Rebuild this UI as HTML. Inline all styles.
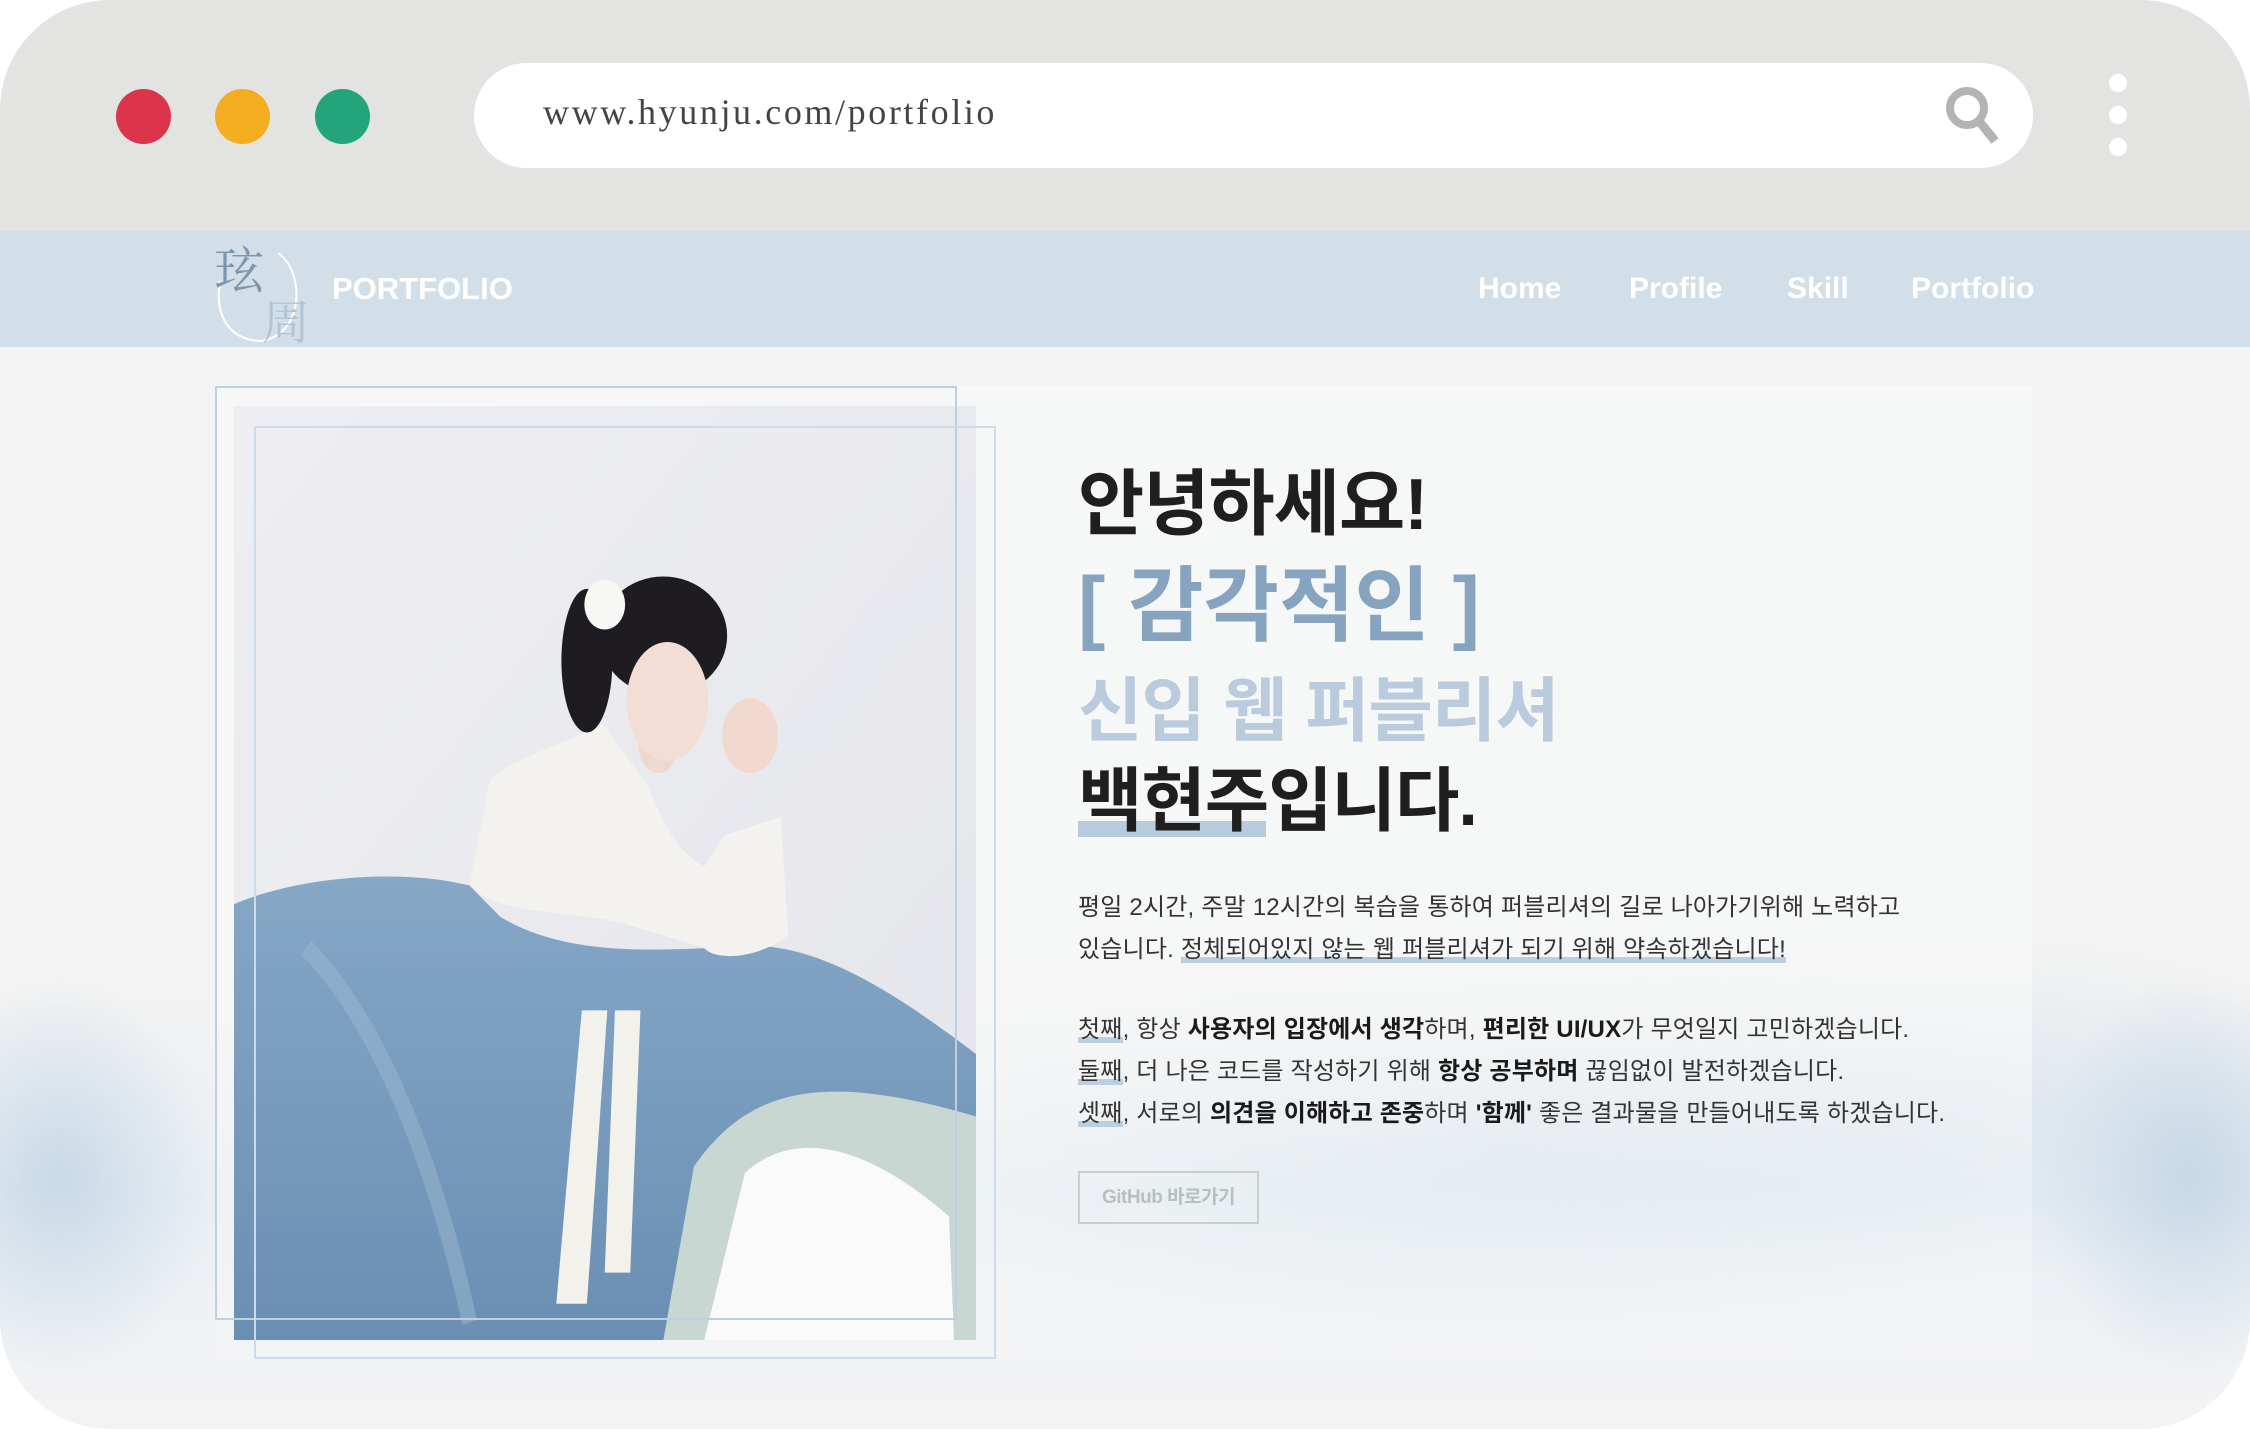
<!DOCTYPE html>
<html><head><meta charset="utf-8"><style>
*{margin:0;padding:0;box-sizing:border-box}
html,body{width:2250px;height:1431px;background:#fff;overflow:hidden}
.win{position:absolute;left:0;top:0;width:2250px;height:1429px;border-radius:110px;overflow:hidden;background:#f3f3f3}
.top{position:absolute;left:0;top:0;width:2250px;height:231px;background:#e3e3e2}
.dot{position:absolute;top:89px;width:55px;height:55px;border-radius:50%}
.url{position:absolute;left:474px;top:63px;width:1559px;height:105px;border-radius:53px;background:#fff}
.url span{position:absolute;left:69px;top:28px;font:36px "Liberation Serif",serif;color:#444;letter-spacing:2.6px}
.nav{position:absolute;left:0;top:231px;width:2250px;height:116px;background:#d3dfe8}
.nav a{position:absolute;top:41px;font:bold 30px "Liberation Sans",sans-serif;color:#fff;text-decoration:none}
.mist{position:absolute;left:0;top:347px;width:2250px;height:1084px;
background:
radial-gradient(ellipse 150px 200px at 60px 830px,rgba(175,200,222,.55),rgba(175,200,222,0)),
radial-gradient(ellipse 150px 200px at 2190px 830px,rgba(175,200,222,.55),rgba(175,200,222,0)),
radial-gradient(ellipse 600px 200px at 1500px 800px,rgba(190,210,228,.45),rgba(190,210,228,0)),
radial-gradient(ellipse 500px 180px at 1900px 760px,rgba(190,210,228,.35),rgba(190,210,228,0)),
linear-gradient(#f3f3f3 0,#f3f3f3 640px,#e8eef3 850px,#f0f2f4 1000px,#f3f3f3 1084px)}
.card{position:absolute;left:215px;top:386px;width:1817px;height:973px;
background:linear-gradient(rgba(246,247,247,.95) 0,rgba(246,247,247,.95) 560px,rgba(246,247,247,.45) 800px,rgba(246,247,247,.5) 973px)}
.fr{position:absolute;border:2px solid #bcd0e2}
.h{position:absolute;left:1078px;font-family:"Liberation Sans","Noto Sans CJK KR",sans-serif;font-weight:bold;line-height:100px;white-space:nowrap;letter-spacing:-1px}
.p{position:absolute;left:1078px;font:24px/42px "Liberation Sans","Noto Sans CJK KR",sans-serif;color:#333;white-space:nowrap;letter-spacing:0.2px}
.p b{color:#1a1a1a}
.u{background:linear-gradient(transparent 78%,#bccfe0 78%)}
</style></head><body>
<div class="win">
<div class="top"></div>
<div class="dot" style="left:116px;background:#dc344a"></div>
<div class="dot" style="left:215px;background:#f3ad1e"></div>
<div class="dot" style="left:315px;background:#24a47a"></div>
<div class="url"><span>www.hyunju.com/portfolio</span>
<svg style="position:absolute;left:1468px;top:20px" width="70" height="70" viewBox="0 0 70 70"><circle cx="25" cy="25" r="17" fill="none" stroke="#b3b3b3" stroke-width="8"/><line x1="37" y1="38" x2="53" y2="58" stroke="#b3b3b3" stroke-width="9"/></svg>
</div>
<div class="dot" style="left:2109px;top:74px;width:18px;height:18px;background:#fff"></div>
<div class="dot" style="left:2109px;top:106px;width:18px;height:18px;background:#fff"></div>
<div class="dot" style="left:2109px;top:138px;width:18px;height:18px;background:#fff"></div>
<div class="nav">
<svg style="position:absolute;left:210px;top:0" width="110" height="116" viewBox="0 0 110 116"><path d="M68 22 C95 40 95 105 50 110 C15 108 5 80 10 50" fill="none" stroke="#fff" stroke-width="2"/>
<text x="4" y="57" font-family="Noto Serif CJK SC,serif" font-size="50" fill="#7b97b0">玹</text>
<text x="52" y="108" font-family="Noto Serif CJK SC,serif" font-size="48" fill="#b2c5d5">周</text></svg>
<a style="left:332px;font-size:31px;top:40px">PORTFOLIO</a>
<a style="left:1478px">Home</a><a style="left:1629px">Profile</a><a style="left:1787px">Skill</a><a style="left:1911px">Portfolio</a>
</div>
<div class="mist"></div>
<div class="card"></div>
<svg style="position:absolute;left:234px;top:406px" width="742" height="934" viewBox="38 32 1455 1496" preserveAspectRatio="none">
<defs><linearGradient id="bg" x1="0" y1="0" x2="1" y2="1"><stop offset="0" stop-color="#eeeef2"/><stop offset="1" stop-color="#e4e5ea"/></linearGradient>
<linearGradient id="sk" x1="0" y1="0" x2="0" y2="1"><stop offset="0" stop-color="#86a7c6"/><stop offset="1" stop-color="#6a8fb3"/></linearGradient></defs>
<rect x="38" y="32" width="1455" height="1496" fill="url(#bg)"/>
<path d="M38 830 C150 790 350 770 500 800 L560 850 C700 920 900 900 1000 900 C1150 880 1300 950 1493 1070 L1493 1528 L38 1528Z" fill="url(#sk)"/>
<path d="M180 900 C300 1000 420 1200 500 1500" stroke="#9cb8d2" stroke-width="30" fill="none" opacity=".5"/>
<path d="M940 1250 C1050 1120 1200 1100 1493 1170 L1493 1528 L880 1528Z" fill="#c9d7d2"/>
<path d="M1040 1260 C1150 1180 1300 1230 1440 1330 L1450 1528 L960 1528Z" fill="#fafafb"/>
<ellipse cx="870" cy="570" rx="40" ry="50" fill="#efd8ce"/>
<path d="M540 630 C600 590 700 570 760 540 L850 640 C880 700 900 740 960 770 L1000 720 L1110 690 L1125 880 C1060 920 980 920 960 900 L800 860 C700 840 560 850 500 800Z" fill="#f4f2ee"/>
<path d="M720 1000 L770 1000 L730 1470 L670 1470Z" fill="#f2f1ec"/>
<path d="M785 1000 L835 1000 L815 1420 L765 1420Z" fill="#f2f1ec"/>
<ellipse cx="730" cy="440" rx="50" ry="115" fill="#1e1c20"/>
<ellipse cx="880" cy="400" rx="125" ry="95" fill="#1e1c20"/>
<ellipse cx="888" cy="505" rx="80" ry="95" fill="#f3ded6"/>
<path d="M790 430 C830 370 940 370 990 440 L990 380 C940 320 820 320 780 380Z" fill="#1e1c20"/>
<ellipse cx="1050" cy="560" rx="55" ry="60" fill="#f2d9cf"/>
<circle cx="765" cy="350" r="40" fill="#f7f7f5"/>
</svg>
<div class="fr" style="left:215px;top:386px;width:742px;height:934px"></div>
<div class="fr" style="left:254px;top:426px;width:742px;height:933px;border-color:#cddbe8"></div>
<div class="h" style="top:455px;font-size:72px;color:#1f1f1f">안녕하세요!</div>
<div class="h" style="top:557px;font-size:82px;color:#86a3c0;letter-spacing:0">[ 감각적인 ]</div>
<div class="h" style="top:661px;font-size:70px;color:#b9cbdc">신입 웹 퍼블리셔</div>
<div style="position:absolute;left:1078px;top:821px;width:188px;height:16px;background:#b8cbdc"></div>
<div class="h" style="top:751px;font-size:70px;color:#1f1f1f">백현주입니다.</div>
<div class="p" style="top:887px">평일 2시간, 주말 12시간의 복습을 통하여 퍼블리셔의 길로 나아가기위해 노력하고<br>있습니다. <span class="u">정체되어있지 않는 웹 퍼블리셔가 되기 위해 약속하겠습니다!</span></div>
<div class="p" style="top:1009px"><span class="u">첫째</span>, 항상 <b>사용자의 입장에서 생각</b>하며, <b>편리한 UI/UX</b>가 무엇일지 고민하겠습니다.<br><span class="u">둘째</span>, 더 나은 코드를 작성하기 위해 <b>항상 공부하며</b> 끊임없이 발전하겠습니다.<br><span class="u">셋째</span>, 서로의 <b>의견을 이해하고 존중</b>하며 <b>'함께'</b> 좋은 결과물을 만들어내도록 하겠습니다.</div>
<div style="position:absolute;left:1078px;top:1171px;width:181px;height:53px;border:2px solid #c6cfca;font:bold 19px/49px 'Liberation Sans','Noto Sans CJK KR',sans-serif;color:#b9c0bc;text-align:center;letter-spacing:-0.5px">GitHub 바로가기</div>
</div>
</body></html>
